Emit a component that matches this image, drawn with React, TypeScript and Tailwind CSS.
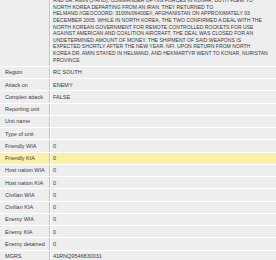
import React from "react";

const rows: [string, string, boolean?][] = [
  ["Region", "RC SOUTH"],
  ["Attack on", "ENEMY"],
  ["Complex attack", "FALSE"],
  ["Reporting unit", ""],
  ["Unit name", ""],
  ["Type of unit", ""],
  ["Friendly WIA", "0"],
  ["Friendly KIA", "0", true],
  ["Host nation WIA", "0"],
  ["Host nation KIA", "0"],
  ["Civilian WIA", "0"],
  ["Civilian KIA", "0"],
  ["Enemy WIA", "0"],
  ["Enemy KIA", "0"],
  ["Enemy detained", "0"],
  ["MGRS", "41RNQ9546830031"],
];

const lines = [
  "AND DR. AMIN (J-AHD), COMMANDER OF HIG FORCES IN KUNAR, BOTH FLEW TO",
  "NORTH KOREA DEPARTING FROM AN IRAN. THEY RETURNED TO",
  "HELMAND //GEOCOORD: 3100N/06400E//, AFGHANISTAN ON APPROXIMATELY 03",
  "DECEMBER 2005. WHILE IN NORTH KOREA, THE TWO CONFIRMED A DEAL WITH THE",
  "NORTH KOREAN GOVERNMENT FOR REMOTE CONTROLLED ROCKETS FOR USE",
  "AGAINST AMERICAN AND COALITION AIRCRAFT. THE DEAL WAS CLOSED FOR AN",
  "UNDETERMINED AMOUNT OF MONEY. THE SHIPMENT OF SAID WEAPONS IS",
  "EXPECTED SHORTLY AFTER THE NEW YEAR. NFI. UPON RETURN FROM NORTH",
  "KOREA DR. AMIN STAYED IN HELMAND, AND HEKMARTYR WENT TO KONAR, NURISTAN",
  "PROVINCE",
];

export default function App() {
  return (
    <div
      className="w-[276px] h-[260px] overflow-hidden bg-white text-[#3a3a3a] text-[5.5px]"
      style={{ fontFamily: '"Liberation Sans", Arial, sans-serif' }}
    >
      <div className="flex flex-col gap-px mt-[-5px] bg-white">
        <div className="flex bg-[#eeeeee]">
          <div className="w-[49px] shrink-0" />
          <div className="w-px bg-[#c2c2c2]" />
          <div className="w-px bg-white" />
          <div className="flex-1 pl-[2px] pt-[2.2px] pb-[2.8px] text-[5.1px] leading-[6.6px] whitespace-nowrap">
            {lines.map((l, i) => (
              <div key={i}>{l}</div>
            ))}
          </div>
        </div>
        {rows.map(([label, value, hl]) => (
          <div
            key={label}
            className={`flex h-[11.25px] items-center ${hl ? "bg-[#fbf0a8]" : "bg-[#eeeeee]"}`}
          >
            <div className="w-[49px] shrink-0 pl-[5px] whitespace-nowrap">{label}</div>
            <div className="w-px self-stretch bg-[#c2c2c2]" />
            <div className="w-px self-stretch bg-white" />
            <div className="flex-1 pl-[2px] whitespace-nowrap">{value}</div>
          </div>
        ))}
      </div>
    </div>
  );
}
